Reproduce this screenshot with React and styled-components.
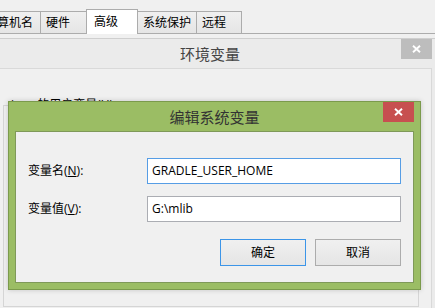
import React from "react";
import styled, { createGlobalStyle } from "styled-components";

const Global = createGlobalStyle`
  html, body { margin: 0; padding: 0; background: #f0f0f0; }
  body {
    font-family: "Open Sans", "Noto Sans CJK SC", sans-serif;
    font-size: 12px;
    color: #000;
  }
`;

const Screen = styled.div`
  position: relative;
  width: 435px;
  height: 308px;
  overflow: hidden;
  background: #f0f0f0;
`;

const TabStrip = styled.div`
  display: flex;
  align-items: flex-end;
  height: 33px;
  margin-left: -21px;
  border-bottom: 1px solid #acacac;
`;

const Tab = styled.div`
  box-sizing: border-box;
  position: relative;
  z-index: ${(p) => (p.$active ? 1 : 0)};
  display: flex;
  align-items: center;
  width: ${(p) => p.$w}px;
  height: ${(p) => (p.$active ? 25 : 22)}px;
  margin-left: ${(p) => (p.$first ? 0 : -1)}px;
  margin-bottom: ${(p) => (p.$active ? -1 : 0)}px;
  padding-left: ${(p) => (p.$active ? 7 : 5)}px;
  padding-bottom: ${(p) => (p.$active ? 1 : 0)}px;
  border: 1px solid #acacac;
  border-bottom: none;
  background: ${(p) =>
    p.$active ? "#ffffff" : "linear-gradient(#f0f0f0, #e5e5e5)"};
  font-size: 12px;
  line-height: 16px;
  white-space: nowrap;
`;

const EnvWindow = styled.div`
  box-sizing: border-box;
  width: 460px;
  margin: 4px 0 0 -20px;
  padding: 0 7px 7px;
  border: 1px solid #cfcfcf;
  background: #ebebeb;
`;

const TitleBar = styled.div`
  display: grid;
  grid-template-columns: 1fr auto 1fr;
  height: 29px;
`;

const WindowTitle = styled.div`
  grid-column: 2;
  align-self: center;
  font-family: "Noto Sans CJK SC", sans-serif;
  font-size: 15px;
  line-height: 20px;
  color: ${(p) => p.$color};
  white-space: nowrap;
`;

const CloseButton = styled.div`
  grid-column: 3;
  justify-self: end;
  align-self: start;
  display: flex;
  align-items: center;
  justify-content: center;
  width: 31px;
  height: 20px;
  background: ${(p) => p.$bg};
`;

const EnvBody = styled.div`
  height: 260px;
  border: 1px solid #d9d9d9;
  background: #f0f0f0;
`;

const GroupBox = styled.fieldset`
  box-sizing: border-box;
  height: 210px;
  margin: 28px 12px 0 14px;
  padding: 0 6px;
  border: 1px solid #d5d5d5;
`;

const GroupLabel = styled.legend`
  padding: 0 1px;
  font-size: 12px;
  line-height: 16px;
  white-space: nowrap;
`;

const Dialog = styled.div`
  position: absolute;
  left: 8px;
  top: 101px;
  box-sizing: border-box;
  display: flex;
  flex-direction: column;
  width: 413px;
  height: 189px;
  padding: 0 6px 6px;
  border: 1px solid #7b9a4c;
  background: #9bbd64;
  box-shadow: 0 0 5px rgba(0, 0, 0, 0.18);
`;

const Client = styled.div`
  flex: 1;
  padding: 26px 11px 0 12px;
  border: 1px solid #7f9959;
  background: #f0f0f0;
`;

const Form = styled.div`
  display: grid;
  grid-template-columns: 119px 254px;
  row-gap: 12px;
  align-items: center;
`;

const Label = styled.label`
  font-size: 12px;
  line-height: 16px;
  white-space: nowrap;
`;

const Field = styled.div`
  box-sizing: border-box;
  display: flex;
  align-items: center;
  height: 26px;
  padding: 0 4px;
  border: 1px solid ${(p) => (p.$focused ? "#569de5" : "#abadb3")};
  background: #ffffff;
  font-size: 12px;
  line-height: 16px;
  white-space: nowrap;
`;

const Buttons = styled.div`
  display: flex;
  justify-content: flex-end;
  gap: 9px;
  width: 373px;
  margin-top: 17px;
`;

const Button = styled.div`
  box-sizing: border-box;
  display: flex;
  align-items: center;
  justify-content: center;
  width: 86px;
  height: 27px;
  border: 1px solid ${(p) => (p.$default ? "#3c95e8" : "#acacac")};
  background: linear-gradient(#f0f0f0, #e5e5e5);
  font-size: 12px;
  line-height: 16px;
`;

const CloseX = () => (
  <svg width="9" height="8" viewBox="0 0 9 8">
    <path d="M1 0.8 L8 7.2 M8 0.8 L1 7.2" stroke="#fff" strokeWidth="1.9" />
  </svg>
);

const tabs = [
  { label: "计算机名", w: 62 },
  { label: "硬件", w: 47 },
  { label: "高级", w: 52, active: true },
  { label: "系统保护", w: 60 },
  { label: "远程", w: 46 },
];

export default function App() {
  return (
    <>
      <Global />
      <Screen>
        <TabStrip>
          {tabs.map((t, i) => (
            <Tab key={t.label} $w={t.w} $active={t.active} $first={i === 0}>
              {t.label}
            </Tab>
          ))}
        </TabStrip>

        <EnvWindow>
          <TitleBar>
            <WindowTitle $color="#444">环境变量</WindowTitle>
            <CloseButton $bg="#bdbdbd">
              <CloseX />
            </CloseButton>
          </TitleBar>
          <EnvBody>
            <GroupBox>
              <GroupLabel>
                ivan 的用户变量(<u>U</u>)
              </GroupLabel>
            </GroupBox>
          </EnvBody>
        </EnvWindow>

        <Dialog>
          <TitleBar>
            <WindowTitle $color="#333">编辑系统变量</WindowTitle>
            <CloseButton $bg="#c75050">
              <CloseX />
            </CloseButton>
          </TitleBar>
          <Client>
            <Form>
              <Label>
                变量名(<u>N</u>):
              </Label>
              <Field $focused>GRADLE_USER_HOME</Field>
              <Label>
                变量值(<u>V</u>):
              </Label>
              <Field>G:\mlib</Field>
            </Form>
            <Buttons>
              <Button $default>确定</Button>
              <Button>取消</Button>
            </Buttons>
          </Client>
        </Dialog>
      </Screen>
    </>
  );
}
